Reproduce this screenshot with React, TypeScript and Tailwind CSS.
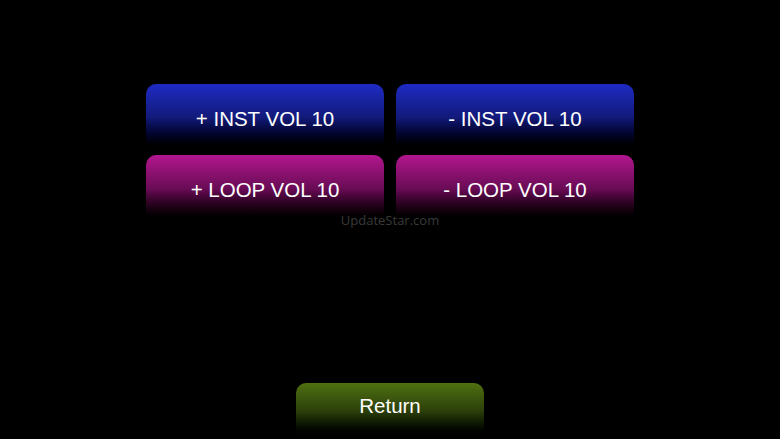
const font = { fontFamily: '"Liberation Sans", Arial, sans-serif' };

const volButtons = [
  { label: '+ INST VOL 10', grad: 'from-[#1e2bc4] via-[#121a7a] to-[#000000]' },
  { label: '- INST VOL 10', grad: 'from-[#1e2bc4] via-[#121a7a] to-[#000000]' },
  { label: '+ LOOP VOL 10', grad: 'from-[#b3168f] via-[#6a0c56] to-[#000000]' },
  { label: '- LOOP VOL 10', grad: 'from-[#b3168f] via-[#6a0c56] to-[#000000]' },
];

export default function App() {
  return (
    <div className="relative w-[780px] h-[439px] overflow-hidden bg-black flex flex-col items-center" style={font}>
      {/* Volume grid */}
      <div className="mt-[84px] grid grid-cols-[238px_238px] gap-x-[12px] gap-y-[4px]">
        {volButtons.map((b) => (
          <button
            key={b.label}
            className={`h-[67px] rounded-[10px] bg-gradient-to-b ${b.grad} text-white text-[20.5px] flex items-center justify-center pt-[3px]`}
          >
            {b.label}
          </button>
        ))}
      </div>

      <div className="flex-1" />

      {/* Return */}
      <button className="w-[188px] h-[56px] rounded-t-[10px] bg-gradient-to-b from-[#4f7111] via-[#2c400a] to-[#000000] text-white text-[20.5px] flex justify-center pt-[8px]">
        Return
      </button>

      {/* watermark */}
      <div className="absolute left-0 right-0 top-[211px] text-center text-[13px] text-[#3a3a3a] pointer-events-none" style={{ fontFamily: '"Open Sans", "Liberation Sans", sans-serif' }}>
        UpdateStar.com
      </div>
    </div>
  );
}
